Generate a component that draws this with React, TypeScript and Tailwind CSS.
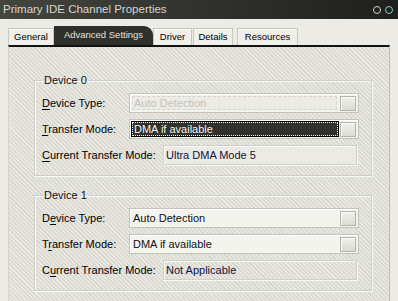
import React from 'react';

const font = { fontFamily: 'Tahoma, "Liberation Sans", Arial, sans-serif' };

const stripes =
  'bg-[repeating-linear-gradient(45deg,#e9e8e2_0px,#e9e8e2_1.5px,#dad9d1_1.5px,#dad9d1_3px)]';

// label with one underlined access key
const Label = ({ text, keyAt, className }: { text: string; keyAt: number; className: string }) => (
  <span className={`shrink-0 text-black ${className}`}>
    {text.slice(0, keyAt)}
    <span className="underline underline-offset-2">{text[keyAt]}</span>
    {text.slice(keyAt + 1)}
  </span>
);

const ComboArrow = () => (
  <div className="absolute right-[2px] top-[2px] h-[15px] w-[16px] border border-[#b5b4ac] bg-gradient-to-b from-[#f0efea] to-[#dcdbd3] shadow-[inset_1px_1px_0_#fbfbf8]" />
);

const Combo = ({
  value,
  state = 'normal',
}: {
  value: string;
  state?: 'normal' | 'disabled' | 'focused';
}) => (
  <div className="relative h-[20px] w-[230px] border border-[#c4c3bb] bg-[#f4f4ef] shadow-[inset_1px_1px_0_#fff]">
    {state === 'disabled' && (
      <div className="absolute inset-y-[2px] left-[2px] right-[21px] flex items-center border border-dashed border-[#d6d5cd] bg-[#ecebe5] pl-[1px] text-[#c4c3bc]">
        {value}
      </div>
    )}
    {state === 'focused' && (
      <div className="absolute inset-y-[2px] left-[2px] right-[20px] flex items-center border border-dotted border-[#f4f4ef] bg-[#31312d] pl-[1px] text-[#f2f2ee] outline outline-1 outline-black">
        {value}
      </div>
    )}
    {state === 'normal' && (
      <div className="absolute inset-y-0 left-[3px] flex items-center text-[#111]">{value}</div>
    )}
    <ComboArrow />
  </div>
);

const Field = ({ value, solid }: { value: string; solid?: boolean }) => (
  <div
    className={`flex h-[20px] w-[194px] items-center border border-[#d2d1c9] pl-[2px] text-[#14143a] shadow-[inset_1px_1px_0_#f7f7f3,1px_1px_0_#f7f7f3] ${
      solid ? 'bg-[#ebeae5]' : ''
    }`}
  >
    {value}
  </div>
);

interface DeviceProps {
  title: string;
  typeKey: number;
  transferKey: number;
  currentKey: number;
  typeState: 'normal' | 'disabled';
  transferState: 'normal' | 'focused';
  current: string;
  solidCurrent?: boolean;
  className?: string;
}

const DeviceGroup = (p: DeviceProps) => (
  <fieldset
    className={`w-[338px] border border-[#d0cfc7] px-[7px] pb-[10px] pt-[6px] shadow-[inset_1px_1px_0_#f8f8f4,1px_1px_0_#f8f8f4] ${
      p.className || ''
    }`}
  >
    <legend className="ml-[1px] px-[1px] leading-[13px] text-[#111]">{p.title}</legend>
    <div className="flex flex-col gap-[6px]">
      <div className="flex items-center">
        <Label text="Device Type:" keyAt={p.typeKey} className="w-[87px]" />
        <Combo value="Auto Detection" state={p.typeState} />
      </div>
      <div className="flex items-center">
        <Label text="Transfer Mode:" keyAt={p.transferKey} className="w-[87px]" />
        <Combo value="DMA if available" state={p.transferState} />
      </div>
      <div className="flex items-center">
        <Label text="Current Transfer Mode:" keyAt={p.currentKey} className="w-[121px]" />
        <Field value={p.current} solid={p.solidCurrent} />
      </div>
    </div>
  </fieldset>
);

const Tab = ({ label, w, ml = 0 }: { label: string; w: string; ml?: number }) => (
  <div
    className={`flex h-[17px] ${w} items-center justify-center border border-b-0 border-[#c9c8c0] bg-[#f0efe9] text-black shadow-[inset_0_1px_0_#fbfbf8]`}
    style={{ marginLeft: ml }}
  >
    {label}
  </div>
);

export default function App() {
  return (
    <div
      className="flex h-[301px] w-[398px] flex-col overflow-hidden bg-[#ecebe5] text-[11px]"
      style={font}
    >
      {/* title bar */}
      <div className="flex h-[19px] shrink-0 items-center bg-gradient-to-r from-[#45453f] to-[#1f1f1d] pl-[3px] pr-[5px]">
        <span className="text-[11.5px] text-[#d6d6cf]">Primary IDE Channel Properties</span>
        <div className="ml-auto flex items-center gap-[4px]">
          <div className="h-[8px] w-[8px] rounded-full border-[1.5px] border-[#d2d2cd]" />
          <div className="h-[8px] w-[8px] rounded-full border-[1.5px] border-[#86c8c6]" />
        </div>
      </div>

      {/* tabs */}
      <div className="flex h-[26px] shrink-0 items-end pl-[8px] text-[9.5px]">
        <Tab label="General" w="w-[46px]" />
        <div className="flex h-[19px] w-[99px] items-center justify-center rounded-tr-[9px] bg-[#2f2f2b] pb-[1px] text-[#e4e4de]">
          Advanced Settings
        </div>
        <Tab label="Driver" w="w-[39px]" />
        <Tab label="Details" w="w-[40px]" ml={1} />
        <Tab label="Resources" w="w-[61px]" ml={4} />
      </div>

      {/* page */}
      <div
        className={`mx-[8px] flex-1 border-l border-r border-t-2 border-l-[#d6d5cd] border-r-[#bdbcb4] border-t-[#121210] pl-[25px] pt-[27px] ${stripes}`}
      >
        <DeviceGroup
          title="Device 0"
          typeKey={0}
          transferKey={0}
          currentKey={0}
          typeState="disabled"
          transferState="focused"
          current="Ultra DMA Mode 5"
          solidCurrent
        />
        <DeviceGroup
          title="Device 1"
          typeKey={1}
          transferKey={1}
          currentKey={1}
          typeState="normal"
          transferState="normal"
          current="Not Applicable"
          className="mt-[13px]"
        />
      </div>
    </div>
  );
}
